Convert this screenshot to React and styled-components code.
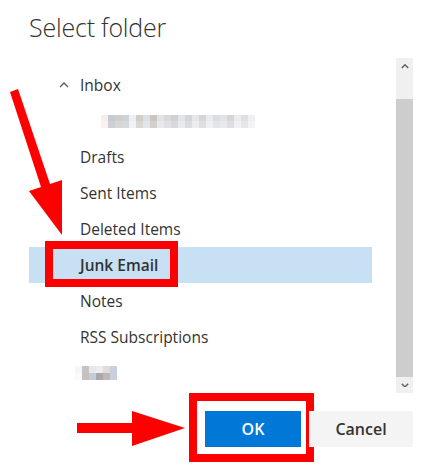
import React from "react";
import styled, { createGlobalStyle } from "styled-components";

const GlobalStyle = createGlobalStyle`
  html, body { margin: 0; padding: 0; background: #ffffff; }
  body { font-family: "Open Sans", "Noto Sans", sans-serif; color: #333333; }
`;

const Dialog = styled.div`
  position: relative;
  width: 433px;
  height: 471px;
  background: #ffffff;
  display: flex;
  flex-direction: column;
  overflow: hidden;
`;

const Title = styled.h1`
  margin: 0;
  padding: 11px 0 0 29px;
  height: 47px;
  box-sizing: border-box;
  font-size: 25px;
  line-height: 32px;
  font-weight: 300;
  color: #333333;
  letter-spacing: -0.2px;
`;

const Body = styled.div`
  display: flex;
  height: 335px;
  margin-top: 11px;
  padding: 0 20px 0 29px;
  gap: 24px;
`;

const List = styled.ul`
  list-style: none;
  margin: 0;
  padding: 9px 0 0 0;
  flex: 1;
`;

const Row = styled.li`
  position: relative;
  height: 36px;
  display: flex;
  align-items: center;
  padding-left: ${(p) => 30 + p.$level * 21}px;
  background: ${(p) => (p.$selected ? "#c7e0f4" : "transparent")};
  font-size: 15.5px;
  font-weight: ${(p) => (p.$selected ? 600 : 400)};
  color: #333333;
  white-space: nowrap;
`;

const Chevron = styled.span`
  width: 21px;
  margin-left: -21px;
  display: flex;
  align-items: center;
`;

const Callout = styled.span`
  position: absolute;
  left: 16px;
  top: -6px;
  width: 133px;
  height: 46px;
  box-sizing: border-box;
  border: 8px solid #ff0000;
  pointer-events: none;
`;

const Pixels = styled.span`
  display: grid;
  grid-template-columns: repeat(${(p) => p.$cols}, 7px);
  grid-auto-rows: ${(p) => p.$cell}px;
  margin-left: ${(p) => p.$shift}px;
`;

const Pixel = styled.span`
  background: ${(p) => p.$c};
`;

const Scrollbar = styled.div`
  width: 17px;
  display: flex;
  flex-direction: column;
  background: #f0f0f0;
`;

const ScrollBtn = styled.div`
  height: ${(p) => p.$h}px;
  display: flex;
  align-items: center;
  justify-content: center;
`;

const Track = styled.div`
  flex: 1;
  display: flex;
  flex-direction: column;
  padding-top: 24px;
`;

const Thumb = styled.div`
  flex: 1;
  background: #cdcdcd;
`;

const Footer = styled.div`
  display: flex;
  justify-content: flex-end;
  gap: 8px;
  padding: 18px 20px 0 0;
`;

const Button = styled.button`
  position: relative;
  height: 36px;
  width: ${(p) => p.$w}px;
  border: none;
  margin: 0;
  padding: 0;
  font-family: "Open Sans", "Noto Sans", sans-serif;
  font-size: 16px;
  font-weight: 600;
  background: ${(p) => (p.$primary ? "#0078d7" : "#f4f4f4")};
  color: ${(p) => (p.$primary ? "#ffffff" : "#333333")};
`;

const ButtonCallout = styled.span`
  position: absolute;
  left: -16px;
  top: -18px;
  right: -13px;
  bottom: -15px;
  border: 8px solid #ff0000;
  pointer-events: none;
`;

const Arrows = styled.svg`
  position: absolute;
  left: 0;
  top: 0;
  pointer-events: none;
`;

const blur1 = [
  ["#f6eee9", "#c3cbd3", "#d3cdc9", "#ccd2d9", "#eceff3", "#d1cdc9", "#dcdfe4", "#c9c5c1", "#e3e3e5", "#d9d9dd", "#cfd0d4", "#e4e4e7", "#d2d6da", "#e6e6ea", "#d5d5d8", "#eaeaee", "#dadde2", "#e3e3e6", "#d6d6da", "#ececef", "#e0e0e4", "#efeff2"],
  ["#f8f1ec", "#ccd0d6", "#dcd6d2", "#d4d9de", "#f0f2f5", "#dbd7d3", "#e4e6ea", "#d3cfcb", "#e9e9eb", "#e1e1e4", "#d8d9dc", "#eaeaed", "#dadde0", "#ececef", "#dedee1", "#efeff2", "#e2e4e8", "#e9e9ec", "#dedee2", "#f1f1f3", "#e6e6e9", "#f3f3f5"],
];

const blur2 = [
  ["#f6f6f6", "#c4c4c6", "#e8e8ea", "#ececec", "#e0dcdc", "#c8d0dc"],
  ["#fafafa", "#c8c0bc", "#c4ccd8", "#a8a8aa", "#c0b8b4", "#c8d0dc"],
];

function Pixelated({ data, cell, shift }) {
  return (
    <Pixels $cols={data[0].length} $cell={cell} $shift={shift}>
      {data.flat().map((c, i) => (
        <Pixel key={i} $c={c} />
      ))}
    </Pixels>
  );
}

const UpChevron = ({ size = 10, color = "#5f5f5f", stroke = 1.4 }) => (
  <svg width={size} height={size * 0.6} viewBox="0 0 10 6">
    <polyline points="1,5 5,1 9,5" fill="none" stroke={color} strokeWidth={stroke} />
  </svg>
);

const DownChevron = ({ size = 8, color = "#5f5f5f", stroke = 1.6 }) => (
  <svg width={size} height={size * 0.6} viewBox="0 0 10 6">
    <polyline points="1,1 5,5 9,1" fill="none" stroke={color} strokeWidth={stroke} />
  </svg>
);

export default function App() {
  return (
    <>
      <GlobalStyle />
      <Dialog>
        <Title>Select folder</Title>
        <Body>
          <List>
            <Row $level={1}>
              <Chevron>
                <UpChevron />
              </Chevron>
              Inbox
            </Row>
            <Row $level={2}>
              <Pixelated data={blur1} cell={6.5} shift={0} />
            </Row>
            <Row $level={1}>Drafts</Row>
            <Row $level={1}>Sent Items</Row>
            <Row $level={1}>Deleted Items</Row>
            <Row $level={1} $selected>
              Junk Email
              <Callout />
            </Row>
            <Row $level={1}>Notes</Row>
            <Row $level={1}>RSS Subscriptions</Row>
            <Row $level={1}>
              <Pixelated data={blur2} cell={7} shift={-5} />
            </Row>
          </List>
          <Scrollbar>
            <ScrollBtn $h={17}>
              <UpChevron size={8} stroke={1.8} />
            </ScrollBtn>
            <Track>
              <Thumb />
            </Track>
            <ScrollBtn $h={16}>
              <DownChevron size={8} stroke={1.8} />
            </ScrollBtn>
          </Scrollbar>
        </Body>
        <Footer>
          <Button $primary $w={96}>
            OK
            <ButtonCallout />
          </Button>
          <Button $w={104}>Cancel</Button>
        </Footer>
        <Arrows width="433" height="471" viewBox="0 0 433 471">
          <polygon
            points="10,92 18,89 50,184 62,180 62,235 29,191 41,187"
            fill="#ff0000"
          />
          <polygon
            points="77,423 132,423 132,411 185,428 132,446 132,433 77,433"
            fill="#ff0000"
          />
        </Arrows>
      </Dialog>
    </>
  );
}
